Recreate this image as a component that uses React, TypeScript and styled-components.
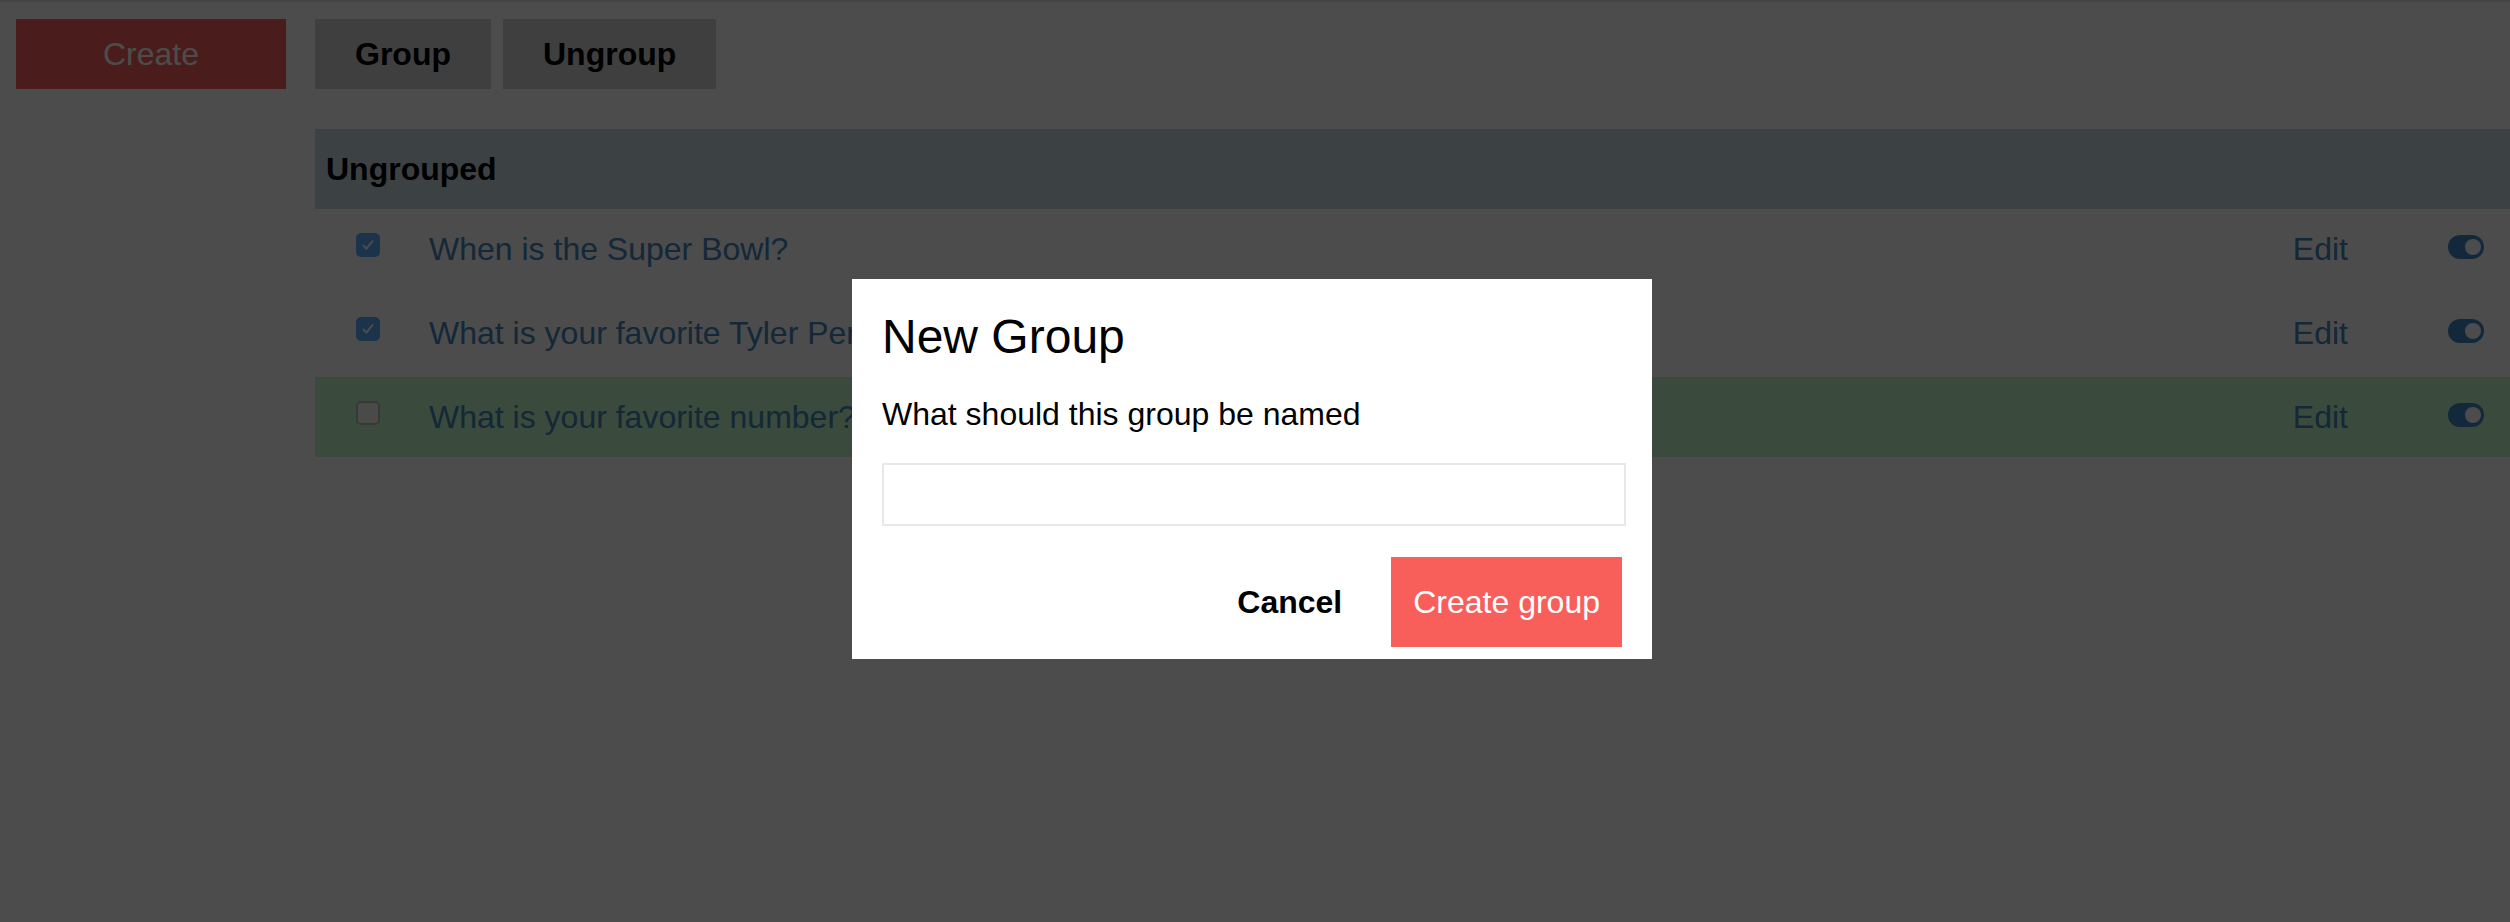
import React from "react";
import styled, { createGlobalStyle } from "styled-components";

const GlobalStyle = createGlobalStyle`
  html, body {
    margin: 0;
    padding: 0;
    background: #ffffff;
    font-family: "Liberation Sans", Arial, Helvetica, sans-serif;
  }
  body {
    border-top: 2px solid #e4e4e4;
  }
`;

const Page = styled.div`
  display: flex;
  align-items: flex-start;
  padding: 17px 0 0 16px;
  min-height: 900px;
  box-sizing: border-box;
`;

const Sidebar = styled.aside`
  width: 270px;
  flex: none;
  margin-right: 29px;
`;

const CreateButton = styled.button`
  width: 100%;
  height: 70px;
  background: #f95f5a;
  color: #ffffff;
  border: none;
  font-family: inherit;
  font-size: 32px;
`;

const Main = styled.main`
  flex: 1;
`;

const Toolbar = styled.div`
  display: flex;
  gap: 12px;
`;

const ToolButton = styled.button`
  height: 70px;
  padding: 0 40px;
  background: #d3d3d3;
  border: none;
  color: #000;
  font-family: inherit;
  font-weight: bold;
  font-size: 32px;
`;

const Section = styled.section`
  margin-top: 40px;
`;

const SectionHeader = styled.div`
  height: 80px;
  display: flex;
  align-items: center;
  padding-left: 11px;
  background: #c8d9e3;
  font-weight: bold;
  font-size: 32px;
  color: #000;
`;

const Row = styled.div<{ $active?: boolean }>`
  height: 80px;
  margin-bottom: 4px;
  display: flex;
  align-items: center;
  padding: 0 26px 0 41px;
  background: ${(p) => (p.$active ? "#c1f7c8" : "#ffffff")};
  color: #4385bb;
  font-size: 32px;
  line-height: 40px;
`;

const Check = styled.span<{ $checked?: boolean }>`
  width: 24px;
  height: 24px;
  box-sizing: border-box;
  border-radius: 5px;
  flex: none;
  margin-bottom: 8px;
  display: flex;
  align-items: center;
  justify-content: center;
  background: ${(p) => (p.$checked ? "#5ab0ff" : "#f7f7f7")};
  border: ${(p) => (p.$checked ? "none" : "2px solid #bdbdbd")};
`;

const Question = styled.span`
  flex: 1;
  margin-left: 49px;
  white-space: nowrap;
`;

const EditLink = styled.span`
  margin-right: 100px;
`;

const Toggle = styled.span`
  position: relative;
  width: 36px;
  height: 24px;
  border-radius: 12px;
  background: #4088c4;
  flex: none;
  margin-bottom: 4px;

  &::after {
    content: "";
    position: absolute;
    right: 3px;
    top: 4px;
    width: 16px;
    height: 16px;
    border-radius: 50%;
    background: #ffffff;
  }
`;

const Overlay = styled.div`
  position: fixed;
  inset: 0;
  background: rgba(0, 0, 0, 0.7);
  display: flex;
  justify-content: center;
  align-items: flex-start;
  padding-top: 279px;
  padding-right: 6px;
`;

const Modal = styled.div`
  width: 800px;
  box-sizing: border-box;
  background: #ffffff;
  padding: 30px 30px 12px;
`;

const Title = styled.h2`
  margin: 0;
  font-size: 48px;
  line-height: 56px;
  font-weight: normal;
  color: #000;
`;

const Label = styled.p`
  margin: 29px 0 0;
  font-size: 32px;
  line-height: 40px;
  color: #000;
`;

const NameInput = styled.input`
  display: block;
  margin-top: 29px;
  width: 100%;
  height: 59px;
  padding: 0;
  border: 2px solid #e8e8e8;
  font-family: inherit;
  font-size: 32px;
  outline: none;
`;

const Actions = styled.div`
  margin-top: 31px;
  display: flex;
  justify-content: flex-end;
  gap: 27px;
`;

const ActionButton = styled.button<{ $primary?: boolean }>`
  height: 90px;
  padding: 0 22px;
  border: none;
  font-family: inherit;
  font-size: 32px;
  font-weight: ${(p) => (p.$primary ? "normal" : "bold")};
  background: ${(p) => (p.$primary ? "#f95f5a" : "transparent")};
  color: ${(p) => (p.$primary ? "#ffffff" : "#000000")};
`;

const questions = [
  { text: "When is the Super Bowl?", checked: true, active: false },
  { text: "What is your favorite Tyler Perry movie?", checked: true, active: false },
  { text: "What is your favorite number?", checked: false, active: true },
];

const CheckMark = () => (
  <svg width="16" height="16" viewBox="0 0 16 16">
    <path d="M3.5 8.5l3 3.2L12.5 4" fill="none" stroke="#ffffff" strokeWidth="2" strokeLinecap="round" strokeLinejoin="round" />
  </svg>
);

const App = () => {
  return (
    <>
      <GlobalStyle />
      <Page>
        <Sidebar>
          <CreateButton>Create</CreateButton>
        </Sidebar>
        <Main>
          <Toolbar>
            <ToolButton>Group</ToolButton>
            <ToolButton>Ungroup</ToolButton>
          </Toolbar>
          <Section>
            <SectionHeader>Ungrouped</SectionHeader>
            {questions.map((q) => (
              <Row key={q.text} $active={q.active}>
                <Check $checked={q.checked}>{q.checked && <CheckMark />}</Check>
                <Question>{q.text}</Question>
                <EditLink>Edit</EditLink>
                <Toggle />
              </Row>
            ))}
          </Section>
        </Main>
      </Page>
      <Overlay>
        <Modal>
          <Title>New Group</Title>
          <Label>What should this group be named</Label>
          <NameInput type="text" />
          <Actions>
            <ActionButton>Cancel</ActionButton>
            <ActionButton $primary>Create group</ActionButton>
          </Actions>
        </Modal>
      </Overlay>
    </>
  );
};

export default App;
